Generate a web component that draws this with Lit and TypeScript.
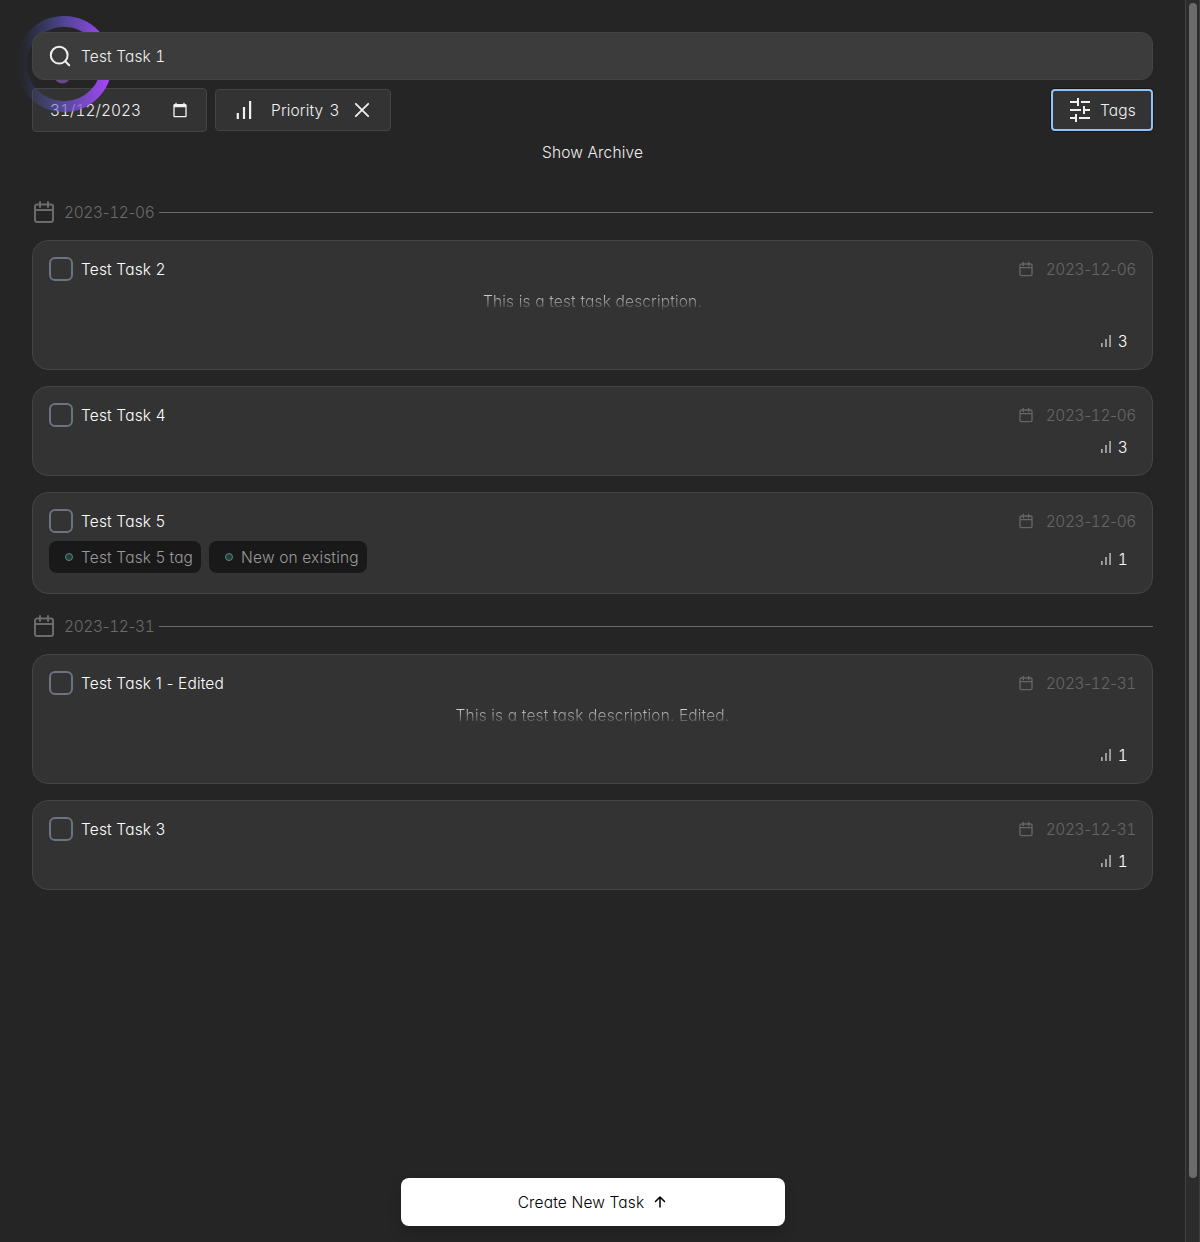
import { LitElement, html, css, svg, nothing } from "lit";
import { customElement } from "lit/decorators.js";

interface Task {
  title: string;
  date: string;
  priority: number;
  description?: string;
  tags?: string[];
}

const groups: { date: string; tasks: Task[] }[] = [
  {
    date: "2023-12-06",
    tasks: [
      { title: "Test Task 2", date: "2023-12-06", priority: 3, description: "This is a test task description." },
      { title: "Test Task 4", date: "2023-12-06", priority: 3 },
      { title: "Test Task 5", date: "2023-12-06", priority: 1, tags: ["Test Task 5 tag", "New on existing"] },
    ],
  },
  {
    date: "2023-12-31",
    tasks: [
      { title: "Test Task 1 - Edited", date: "2023-12-31", priority: 1, description: "This is a test task description. Edited." },
      { title: "Test Task 3", date: "2023-12-31", priority: 1 },
    ],
  },
];

const calendarPath = svg`<path d="M5 4.500h14a2 2 0 0 1 2 2V20a2 2 0 0 1-2 2H5a2 2 0 0 1-2-2V6.500a2 2 0 0 1 2-2zM3 10h18M8 2v5M16 2v5"/>`;

const calendar = (size: number) => html`<svg class="stroke" width=${size} height=${size} viewBox="0 0 24 24" stroke-width="2">${calendarPath}</svg>`;

const bars = (size: number) => html`<svg width=${size} height=${size} viewBox="0 0 24 24" fill="currentColor"><path d="M4.700 15h2.200v6H4.700zM10.900 9h2.200v12h-2.200zM17 3h2.200v18H17z"/></svg>`;

// Tabular figures apply to the digits only, so the hyphens keep their narrow width.
const isoDate = (date: string) =>
  date.split("-").map((part, i) => html`${i ? "-" : ""}<span class="num">${part}</span>`);

@customElement("app-root")
export class AppRoot extends LitElement {
  static styles = css`
    :host {
      display: flex;
      height: 1242px;
      background: #252525;
      color: #f0f0f0;
      font: 350 15.500px/24px Inter, "Liberation Sans", sans-serif;
      font-feature-settings: "cv11";
      letter-spacing: 0.150px;
      overflow: hidden;
    }
    * { box-sizing: border-box; }
    svg { display: block; flex: none; }
    .num { font-feature-settings: "cv11", "tnum"; }
    .iso { letter-spacing: -0.400px; }
    .stroke { fill: none; stroke: currentColor; stroke-linecap: round; stroke-linejoin: round; }
    .text { padding-top: 2px; white-space: nowrap; }
    .page { position: relative; width: 1185px; padding: 32px; display: flex; flex-direction: column; }
    .spinner { position: absolute; left: 16px; top: 16px; z-index: 1; pointer-events: none; }
    .search {
      position: relative; z-index: 2; flex: none;
      display: flex; align-items: center; gap: 9px;
      height: 48px; padding: 0 15px;
      border: 1px solid #444; border-radius: 12px; background: #3c3c3c;
    }
    .filters { display: flex; align-items: center; gap: 8px; height: 44px; margin-top: 8px; flex: none; }
    .box { display: flex; align-items: center; height: 42px; border: 1px solid #444; border-radius: 4px; background: #333; }
    .date { width: 175px; height: 44px; padding: 0 18px 0 17px; justify-content: space-between; }
    .date .text { letter-spacing: 0; }
    .priority { width: 176px; padding-left: 16px; }
    .priority .name { margin-left: 15px; }
    .priority .level { margin: 0 10px 0 6px; }
    .tags-button { margin-left: auto; width: 102px; padding-left: 15px; gap: 8px; border: 2px solid #90c2ff; box-shadow: 0 0 0 1px #151515; }
    .archive { height: 24px; margin-top: 8px; padding-top: 1px; text-align: center; flex: none; }
    .list { display: flex; flex-direction: column; margin-top: 36px; }
    .divider { display: flex; align-items: center; height: 24px; color: #6b6b6b; margin-bottom: 16px; }
    .divider .day { margin-left: 8px; width: 95px; }
    .divider .line { flex: 1; height: 1px; background: #6b6b6b; }
    .group { margin-bottom: 4px; }
    .card { border: 1px solid #444; border-radius: 16px; background: #333; padding: 16px; margin-bottom: 16px; }
    .head { display: flex; align-items: center; height: 24px; }
    .check { width: 24px; height: 24px; border: 2px solid #6b7280; border-radius: 6px; margin-right: 8px; }
    .title { color: #fff; }
    .due { display: flex; align-items: center; justify-content: space-between; width: 118px; margin-left: auto; color: #666; }
    .desc {
      margin-top: 9px; height: 31px; text-align: center; color: transparent;
      background: linear-gradient(#fff 0, #333 22px); background-clip: text; -webkit-background-clip: text;
    }
    .foot { display: flex; justify-content: space-between; height: 32px; align-items: flex-end; }
    .foot.tagged { height: 44px; }
    .foot.tagged .level-row { margin-bottom: 6px; }
    .tags { display: flex; gap: 8px; align-self: flex-start; margin-top: 8px; }
    .tag { display: flex; align-items: center; height: 32px; padding: 0 8px 0 16px; gap: 8px; border-radius: 8px; background: #191919; color: #999; }
    .dot { width: 8px; height: 8px; border-radius: 50%; background: #1d403a; border: 1px solid #66827b; }
    .level-row { display: flex; align-items: center; gap: 4px; margin-left: auto; padding-right: 8px; height: 24px; color: #fff; }
    .level-row svg { color: #bbb; }
    .create {
      position: absolute; left: 401px; bottom: 16px; width: 384px; height: 48px;
      display: flex; align-items: center; justify-content: center; gap: 8px;
      border-radius: 8px; background: #fff; color: #000; box-shadow: 0 8px 14px rgba(0, 0, 0, 0.15);
    }
    .scroll { width: 15px; border-left: 1px solid #424242; border-right: 1px solid #3d3d3d; background: #2c2c2c; padding: 3px; }
    .thumb { width: 8px; height: 1175px; border-radius: 4px; background: #6b6b6b; }
  `;

  private card(task: Task) {
    return html`<div class="card">
      <div class="head">
        <span class="check"></span><span class="title text">${task.title}</span>
        <span class="due">${calendar(16)}<span class="text iso">${isoDate(task.date)}</span></span>
      </div>
      ${task.description ? html`<div class="desc">${task.description}</div>` : nothing}
      <div class="foot ${task.tags ? "tagged" : ""}">
        ${task.tags ? html`<div class="tags">${task.tags.map((t) => html`<span class="tag"><i class="dot"></i><span class="text">${t}</span></span>`)}</div>` : nothing}
        <div class="level-row">${bars(16)}<span class="text num">${task.priority}</span></div>
      </div>
    </div>`;
  }

  render() {
    return html`
      <main class="page">
        <svg class="spinner" width="96" height="96" viewBox="0 0 96 96">
          <defs><linearGradient id="ring" x1="0" x2="1" y1="0" y2="0"><stop offset="0" stop-color="#3b5bb5" stop-opacity="0.030"/><stop offset="0.500" stop-color="#6a55d0" stop-opacity="0.650"/><stop offset="1" stop-color="#a346f5"/></linearGradient></defs>
          <circle cx="48" cy="48" r="42.600" fill="none" stroke="url(#ring)" stroke-width="10.700"/>
          <circle cx="46.300" cy="59.500" r="8" fill="#664a82"/>
        </svg>
        <div class="search">
          <svg class="stroke" width="24" height="24" viewBox="0 0 24 24" stroke-width="2"><circle cx="11.200" cy="11.200" r="8.400"/><path d="m17.200 17.200 4 4"/></svg>
          <span class="text num">Test Task 1</span>
        </div>
        <div class="filters">
          <div class="box date"><span class="text num">31/12/2023</span>
            <svg width="16" height="16" viewBox="0 0 24 24" fill="currentColor"><path d="M20 3h-1V1h-2v2H7V1H5v2H4c-1.100 0-2 .9-2 2v16c0 1.100.9 2 2 2h16c1.100 0 2-.9 2-2V5c0-1.100-.9-2-2-2zm0 18H4V8h16v13z"/></svg>
          </div>
          <div class="box priority">${bars(24)}<span class="name text">Priority</span><span class="level text num">3</span>
            <svg class="stroke" width="24" height="24" viewBox="0 0 24 24" stroke-width="1.800"><path d="m5.800 5.800 12.400 12.400m0-12.400-12.400 12.400"/></svg>
          </div>
          <div class="box tags-button">
            <svg width="24" height="24" viewBox="0 0 24 24" fill="none" stroke="currentColor" stroke-width="2"><path d="M2 4h8m3 0h9M10 0v8M2 12h11m3 0h6M16 8v8M2 20h6m3 0h11M8 16v8"/></svg>
            <span class="text">Tags</span>
          </div>
        </div>
        <div class="archive">Show Archive</div>
        <div class="list">
          ${groups.map((g) => html`<section class="group">
            <div class="divider">${calendar(24)}<span class="day text iso">${isoDate(g.date)}</span><span class="line"></span></div>
            ${g.tasks.map((t) => this.card(t))}
          </section>`)}
        </div>
        <div class="create"><span class="text">Create New Task</span>
          <svg class="stroke" width="16" height="16" viewBox="0 0 16 16" stroke-width="1.500"><path d="M8 13V3M3.500 7.500 8 3l4.500 4.500"/></svg>
        </div>
      </main>
      <aside class="scroll"><div class="thumb"></div></aside>
    `;
  }
}
